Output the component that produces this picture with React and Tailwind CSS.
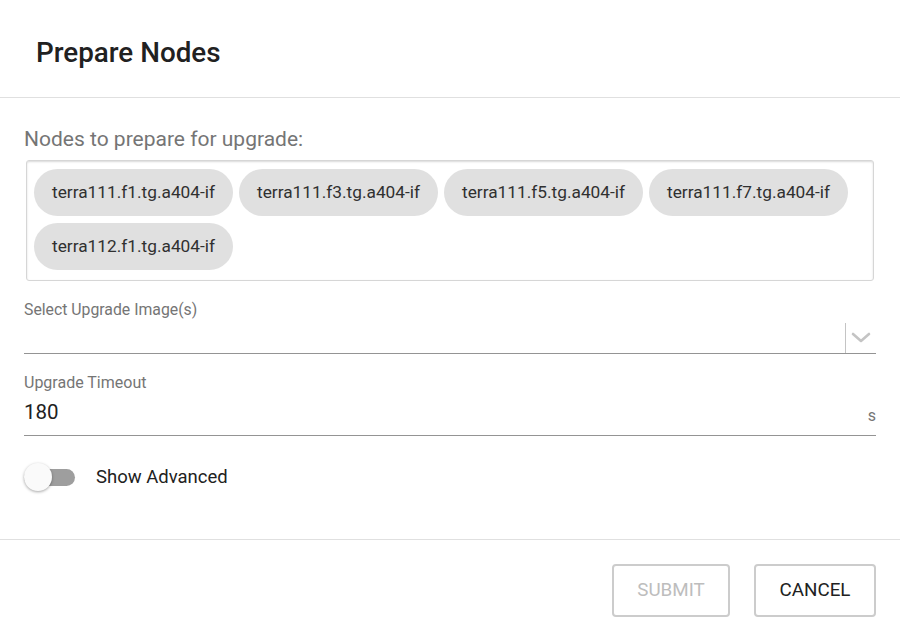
const nodes = [
  'terra111.f1.tg.a404-if',
  'terra111.f3.tg.a404-if',
  'terra111.f5.tg.a404-if',
  'terra111.f7.tg.a404-if',
  'terra112.f1.tg.a404-if',
];

export default function App() {
  return (
    <div className="w-[900px] h-[641px] bg-white text-[#212121] font-['Roboto',sans-serif] flex flex-col">
      {/* Header */}
      <div className="h-[98px] border-b border-[#e0e0e0] flex items-center px-9">
        <h1 className="text-[27.8px] font-medium leading-none pt-[9px]">Prepare Nodes</h1>
      </div>

      {/* Body */}
      <div className="flex-1 px-6 pt-[28px]">
        <p className="text-[21px] leading-[26px] text-[#757575]">Nodes to prepare for upgrade:</p>

        <div className="mt-[8px] mx-[2px] h-[121px] rounded-[3px] border border-[#d6d6d6] shadow-[inset_0_1px_2px_rgba(0,0,0,0.15)] px-[7px] pt-[8px] flex flex-wrap content-start gap-x-[6px] gap-y-[7px]">
          {nodes.map((n) => (
            <span
              key={n}
              className="h-[47px] w-[199px] rounded-full bg-[#e0e0e0] flex items-center justify-center text-[17.3px] text-[#303030]"
            >
              {n}
            </span>
          ))}
        </div>

        {/* Select */}
        <div className="mt-[20px]">
          <p className="text-[15.8px] leading-[18px] text-[#757575]">Select Upgrade Image(s)</p>
          <div className="h-[35px] border-b border-[#949494] flex items-end justify-end">
            <div className="h-[30px] w-[31px] border-l border-[#c4c4c4] flex items-center justify-center">
              <svg width="20" height="12" viewBox="0 0 20 12" fill="none">
                <polyline points="2,2 10,9 18,2" stroke="#c4c4c4" strokeWidth="2.6" strokeLinecap="round" strokeLinejoin="round" />
              </svg>
            </div>
          </div>
        </div>

        {/* Timeout */}
        <div className="mt-[20px]">
          <p className="text-[16px] leading-[18px] text-[#757575]">Upgrade Timeout</p>
          <div className="h-[44px] border-b border-[#949494] flex items-center justify-between">
            <span className="text-[20.5px] leading-none -mt-[3px]">180</span>
            <span className="text-[16px] text-[#757575] mt-[5px]">s</span>
          </div>
        </div>

        {/* Toggle */}
        <div className="mt-[26px] flex items-center">
          <div className="relative w-[52px] h-[30px] flex items-center">
            <div className="w-[51px] h-[17px] rounded-full bg-[#9e9e9e]" />
            <div className="absolute left-0 top-[1px] w-[28px] h-[28px] rounded-full bg-[#fafafa] shadow-[0_1px_3px_rgba(0,0,0,0.35)]" />
          </div>
          <span className="ml-[20px] text-[18.5px] mt-[1px]">Show Advanced</span>
        </div>
      </div>

      {/* Footer */}
      <div className="h-[102px] border-t border-[#e0e0e0] flex items-start justify-end gap-[24px] pt-[24px] pr-6">
        <button className="h-[53px] w-[118px] rounded-[4px] border-2 border-[#cccccc] text-[18.8px] text-[#bdbdbd]">
          SUBMIT
        </button>
        <button className="h-[53px] w-[122px] rounded-[4px] border-2 border-[#cccccc] text-[18.8px] text-[#212121]">
          CANCEL
        </button>
      </div>
    </div>
  );
}
